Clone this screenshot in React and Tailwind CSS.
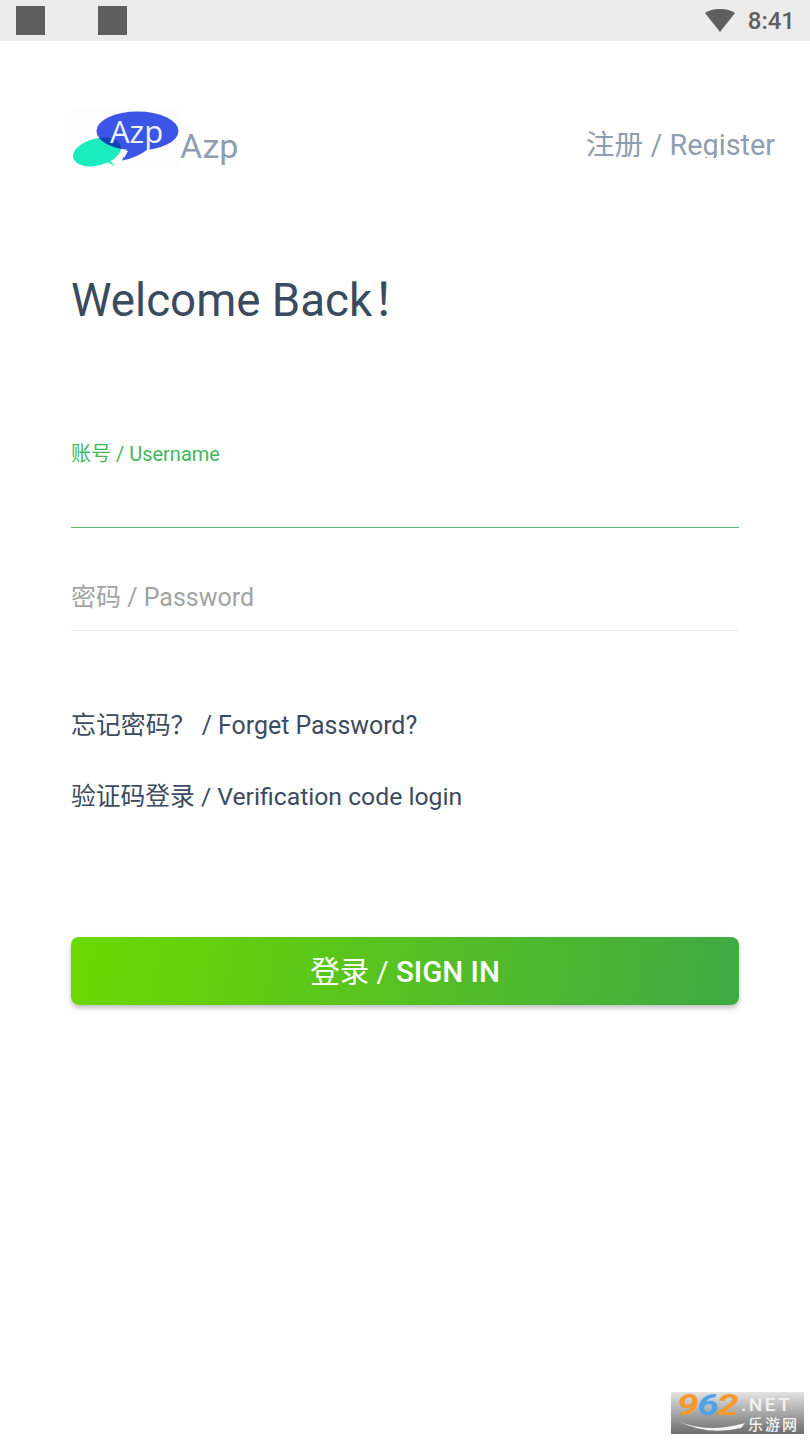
import React from "react";

function Logo() {
  return (
    <svg width="110" height="60" viewBox="0 0 110 60" className="shrink-0">
      <defs>
        <clipPath id="blueClip">
          <ellipse cx="66.5" cy="22" rx="41" ry="19.5" />
        </clipPath>
      </defs>
      {/* faint box around the logo picture */}
      <rect x="0" y="1" width="109" height="58" fill="#fdfdfd" />
      {/* green bubble */}
      <ellipse cx="26" cy="43" rx="24.5" ry="13.5" fill="#1ceabf" transform="rotate(-14 26 43)" />
      <path d="M35 52 L44 57.5 L37 49 Z" fill="#1ceabf" />
      {/* blue bubble */}
      <ellipse cx="66.5" cy="22" rx="41" ry="19.5" fill="#3b55e6" />
      <path d="M57 38 L51 51.5 Q66 49 77 40 Z" fill="#3b55e6" />
      {/* overlap */}
      <g clipPath="url(#blueClip)">
        <ellipse cx="26" cy="43" rx="24.5" ry="13.5" fill="#0e47b4" transform="rotate(-14 26 43)" />
      </g>
      <path d="M50 41 L57 42 L53 49 Z" fill="#ffffff" />
      <text x="39" y="34" fontSize="31" fill="#eef2ff" fontFamily="'Open Sans', sans-serif">Azp</text>
    </svg>
  );
}

function Watermark() {
  return (
    <div className="absolute left-[671px] top-[1392px] w-[133px] h-[42px] bg-gradient-to-b from-[#e4e4e4] to-[#6e6e6e]">
      <svg width="80" height="42" viewBox="0 0 80 42" className="absolute left-0 top-0">
        <path d="M7 29 Q36 42 74 31 L70 36 Q36 44 7 29 Z" fill="#f4f4f4" />
      </svg>
      <div className="relative flex items-start pl-[6px] h-[26px]">
        <span className="inline-block origin-left scale-x-[1.3] w-[20px] text-[30px] leading-[26px] font-bold italic text-[#f59a2e]">9</span>
        <span className="inline-block origin-left scale-x-[1.3] w-[20px] text-[30px] leading-[26px] font-bold italic text-[#4da3e8]">6</span>
        <span className="inline-block origin-left scale-x-[1.3] w-[24px] text-[30px] leading-[26px] font-bold italic text-[#f59a2e]">2</span>
        <span className="mt-[3px] text-[19px] leading-[20px] font-medium text-[#f2f2f2] tracking-[2.5px]">.NET</span>
      </div>
      <div className="relative flex justify-end pr-[5px] text-[15px] leading-[15px] font-medium text-[#f4f4f4] tracking-[2px]">乐游网</div>
    </div>
  );
}

export default function App() {
  return (
    <div className="relative w-[810px] h-[1440px] bg-white overflow-hidden font-['Roboto','Noto_Sans_CJK_SC',sans-serif]">
      {/* Status bar */}
      <div className="flex items-center h-[41px] bg-[#ececec] pl-4 pr-[15px]">
        <div className="w-[29px] h-[29px] bg-[#5f5f5f]" />
        <div className="w-[29px] h-[29px] bg-[#5f5f5f] ml-[53px]" />
        <svg width="30" height="24" viewBox="0 0 30 24" className="ml-auto">
          <path d="M0 4 C8 -1.5 22 -1.5 30 4 L15 23 Z" fill="#5f5f5f" />
        </svg>
        <span className="ml-[13px] text-[24px] font-medium text-[#5f5f5f] leading-none">8:41</span>
      </div>

      <div className="pl-[71px] pr-[71px]">
        {/* Top row */}
        <div className="flex items-start mt-[68px] mr-[-36px] h-[60px]">
          <Logo />
          <span className="text-[34px] leading-[40px] text-[#8f9db0] mt-[17px] -ml-[1px]">Azp</span>
          <div className="ml-auto mt-[16px] h-[33px] overflow-hidden text-[28.8px] leading-[40px] text-[#8f9db0]">注册 / Register</div>
        </div>

        <h1 className="mt-[105px] text-[45.7px] leading-[54px] text-[#3b4b5f]">Welcome Back！</h1>

        {/* Username */}
        <div className="mt-[112px] h-[88px] flex flex-col">
          <span className="text-[20px] leading-[28px] text-[#41b85c] block">账号 / Username</span>
          <div className="mt-auto h-px bg-[#5cb870]" />
        </div>

        {/* Password */}
        <div className="border-b border-[#eeeeee] h-[103px] pt-[53px]">
          <span className="text-[25px] leading-[34px] text-[#a3a3a3] block">密码 / Password</span>
        </div>

        <p className="mt-[78px] text-[24.9px] leading-[34px] text-[#3b4b5f]">忘记密码？ / Forget Password?</p>
        <p className="mt-[37px] text-[24.75px] leading-[34px] text-[#3b4b5f]">验证码登录 / Verification code login</p>

        <button className="mt-[123px] w-full h-[68px] pt-[2px] rounded-lg text-white text-[29.5px] bg-[linear-gradient(100deg,#6cd900,#40a944)] shadow-[0_3px_5px_rgba(0,0,0,0.25)]">
          登录 / <span className="font-medium">SIGN IN</span>
        </button>
      </div>

      <Watermark />
    </div>
  );
}
